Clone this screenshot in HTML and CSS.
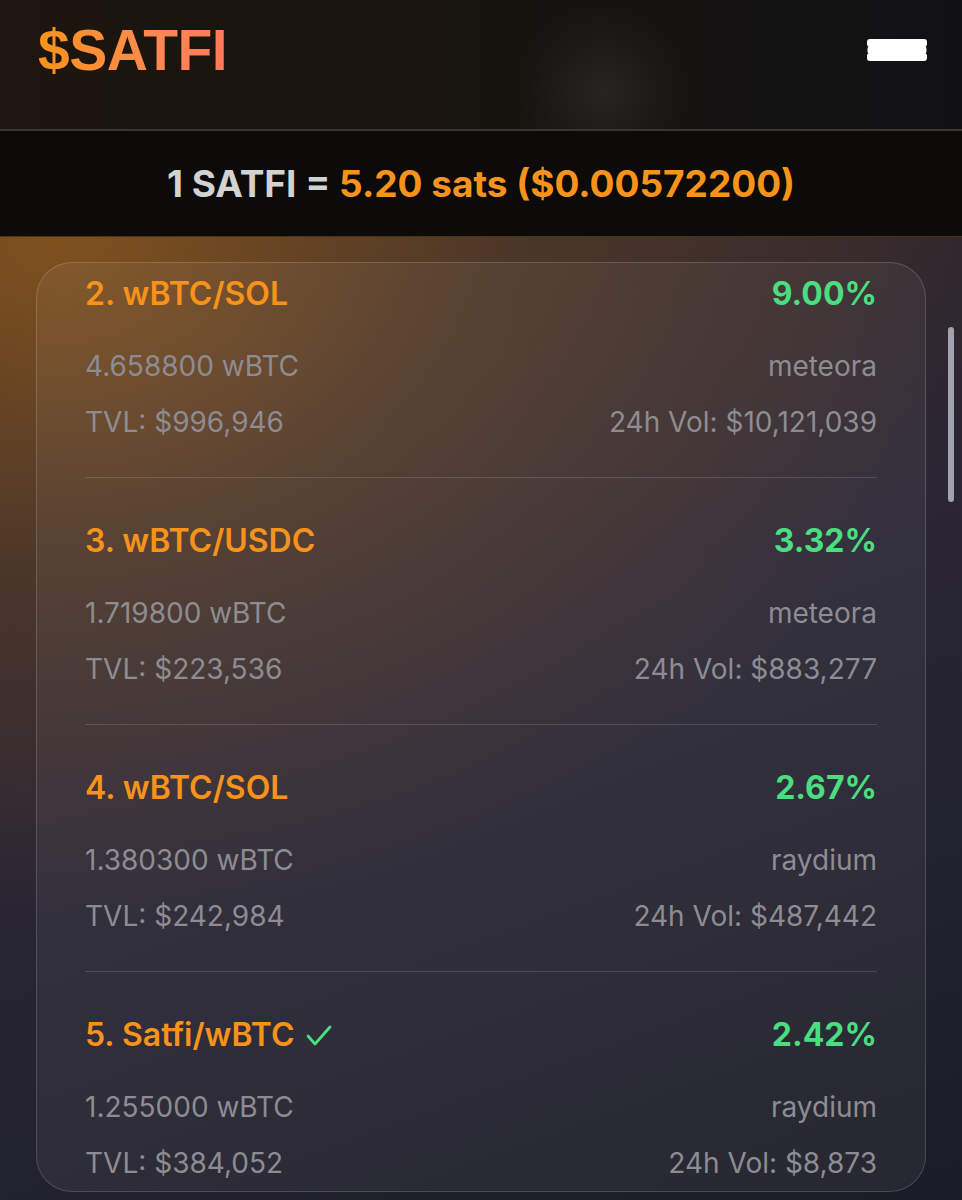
FILE: index.html
```html
<!DOCTYPE html>
<html lang="en">
<head>
  <meta charset="UTF-8" />
  <meta name="viewport" content="width=device-width, initial-scale=1.0"/>
  <title>$SATFI Pools</title>
  <link rel="stylesheet" href="styles.css">
</head>
<body>
  <header class="topbar">
    <div class="logo">$SATFI</div>
    <button class="menu-btn" aria-label="Menu">
      <svg width="60" height="22" viewBox="0 0 60 22">
        <rect x="0" y="0" width="60" height="8" rx="3" fill="#fff"/>
        <rect x="0.5" y="7" width="59" height="8" rx="3" fill="#fff"/>
        <rect x="0" y="14" width="60" height="8" rx="3" fill="#fff"/>
      </svg>
    </button>
  </header>

  <div class="price-bar">
    <span class="price-label">1 SATFI = <span class="price">5.20 sats ($0.00572200)</span></span>
  </div>

  <main class="content">
    <div class="pools-card">
      <div class="pool">
        <div class="pool-row pool-head">
          <span class="pool-name">2. wBTC/SOL</span>
          <span class="pool-apr">9.00%</span>
        </div>
        <div class="pool-row">
          <span>4.658800 wBTC</span>
          <span>meteora</span>
        </div>
        <div class="pool-row">
          <span>TVL: $996,946</span>
          <span>24h Vol: $10,121,039</span>
        </div>
      </div>

      <div class="pool">
        <div class="pool-row pool-head">
          <span class="pool-name">3. wBTC/USDC</span>
          <span class="pool-apr">3.32%</span>
        </div>
        <div class="pool-row">
          <span>1.719800 wBTC</span>
          <span>meteora</span>
        </div>
        <div class="pool-row">
          <span>TVL: $223,536</span>
          <span>24h Vol: $883,277</span>
        </div>
      </div>

      <div class="pool">
        <div class="pool-row pool-head">
          <span class="pool-name">4. wBTC/SOL</span>
          <span class="pool-apr">2.67%</span>
        </div>
        <div class="pool-row">
          <span>1.380300 wBTC</span>
          <span>raydium</span>
        </div>
        <div class="pool-row">
          <span>TVL: $242,984</span>
          <span>24h Vol: $487,442</span>
        </div>
      </div>

      <div class="pool">
        <div class="pool-row pool-head">
          <span class="pool-name">5. Satfi/wBTC
            <svg class="check" width="26" height="22" viewBox="0 0 26 22">
              <polyline points="2,11 9,19 24,2" fill="none" stroke="#4ade80" stroke-width="2.8" stroke-linecap="round" stroke-linejoin="round"/>
            </svg>
          </span>
          <span class="pool-apr">2.42%</span>
        </div>
        <div class="pool-row">
          <span>1.255000 wBTC</span>
          <span>raydium</span>
        </div>
        <div class="pool-row">
          <span>TVL: $384,052</span>
          <span>24h Vol: $8,873</span>
        </div>
      </div>
    </div>
    <div class="scroll-thumb"></div>
  </main>
</body>
</html>
```

FILE: styles.css
```css
* {
  box-sizing: border-box;
}

html, body {
  margin: 0;
  height: 100%;
}

body {
  font-family: 'Inter', 'Liberation Sans', sans-serif;
  background: #1c1c28;
  overflow: hidden;
}

.topbar {
  height: 131px;
  display: flex;
  justify-content: space-between;
  align-items: flex-start;
  padding: 22px 35px 0 38px;
  border-bottom: 2px solid #3a3633;
  background:
    radial-gradient(circle 90px at 605px 92px, rgba(52, 50, 48, 0.55), transparent 100%),
    linear-gradient(90deg, #1d160f 0%, #17130f 50%, #111114 100%);
}

.logo {
  font-family: 'Liberation Sans', Arial, sans-serif;
  font-weight: 700;
  font-size: 57px;
  letter-spacing: -0.5px;
  line-height: 1;
  background: linear-gradient(90deg, #f7931a 0%, #ff8a4c 55%, #ff7a5c 100%);
  -webkit-background-clip: text;
  background-clip: text;
  color: transparent;
}

.menu-btn {
  background: none;
  border: none;
  padding: 0;
  margin-top: 17px;
  cursor: pointer;
  display: flex;
}

.price-bar {
  height: 106px;
  display: flex;
  justify-content: center;
  align-items: center;
  background: #0c0b0a;
  border-bottom: 1px solid #4a3418;
}

.price-label {
  color: #d2d2d2;
  font-weight: 700;
  font-size: 37px;
  line-height: 1;
}

.price {
  color: #f7931a;
}

.content {
  position: relative;
  height: calc(100% - 237px);
  padding: 25px 36px 0 36px;
  background:
    radial-gradient(ellipse 900px 680px at 60px 0px, rgba(140, 88, 30, 0.85), rgba(105, 70, 38, 0.45) 50%, transparent 100%),
    linear-gradient(160deg, #3a2b24 0%, #2b2634 45%, #23222f 70%, #1b1c27 100%);
}

.pools-card {
  height: 930px;
  overflow: hidden;
  border: 1px solid rgba(255, 255, 255, 0.16);
  border-radius: 36px;
  background: rgba(255, 255, 255, 0.05);
  padding: 11px 48px 0 48px;
}

.pool {
  padding: 43px 0 37px;
  border-bottom: 1px solid rgba(255, 255, 255, 0.14);
}

.pool:first-child {
  padding-top: 0;
}

.pool:last-child {
  border-bottom: none;
}

.pool-row {
  display: flex;
  justify-content: space-between;
  align-items: center;
  font-size: 28px;
  line-height: 36px;
  color: #8d8c92;
}

.pool-row + .pool-row {
  margin-top: 20px;
}

.pool-head {
  font-size: 32px;
  line-height: 40px;
  margin-bottom: 34px;
}

.pool-name {
  color: #f7931a;
  font-weight: 600;
  display: flex;
  align-items: center;
  gap: 12px;
}

.pool-apr {
  color: #4ade80;
  font-weight: 700;
}

.check {
  margin-top: 2px;
}

.scroll-thumb {
  position: absolute;
  top: 90px;
  right: 8px;
  width: 6px;
  height: 175px;
  border-radius: 3px;
  background: #a2a2ae;
}
```
